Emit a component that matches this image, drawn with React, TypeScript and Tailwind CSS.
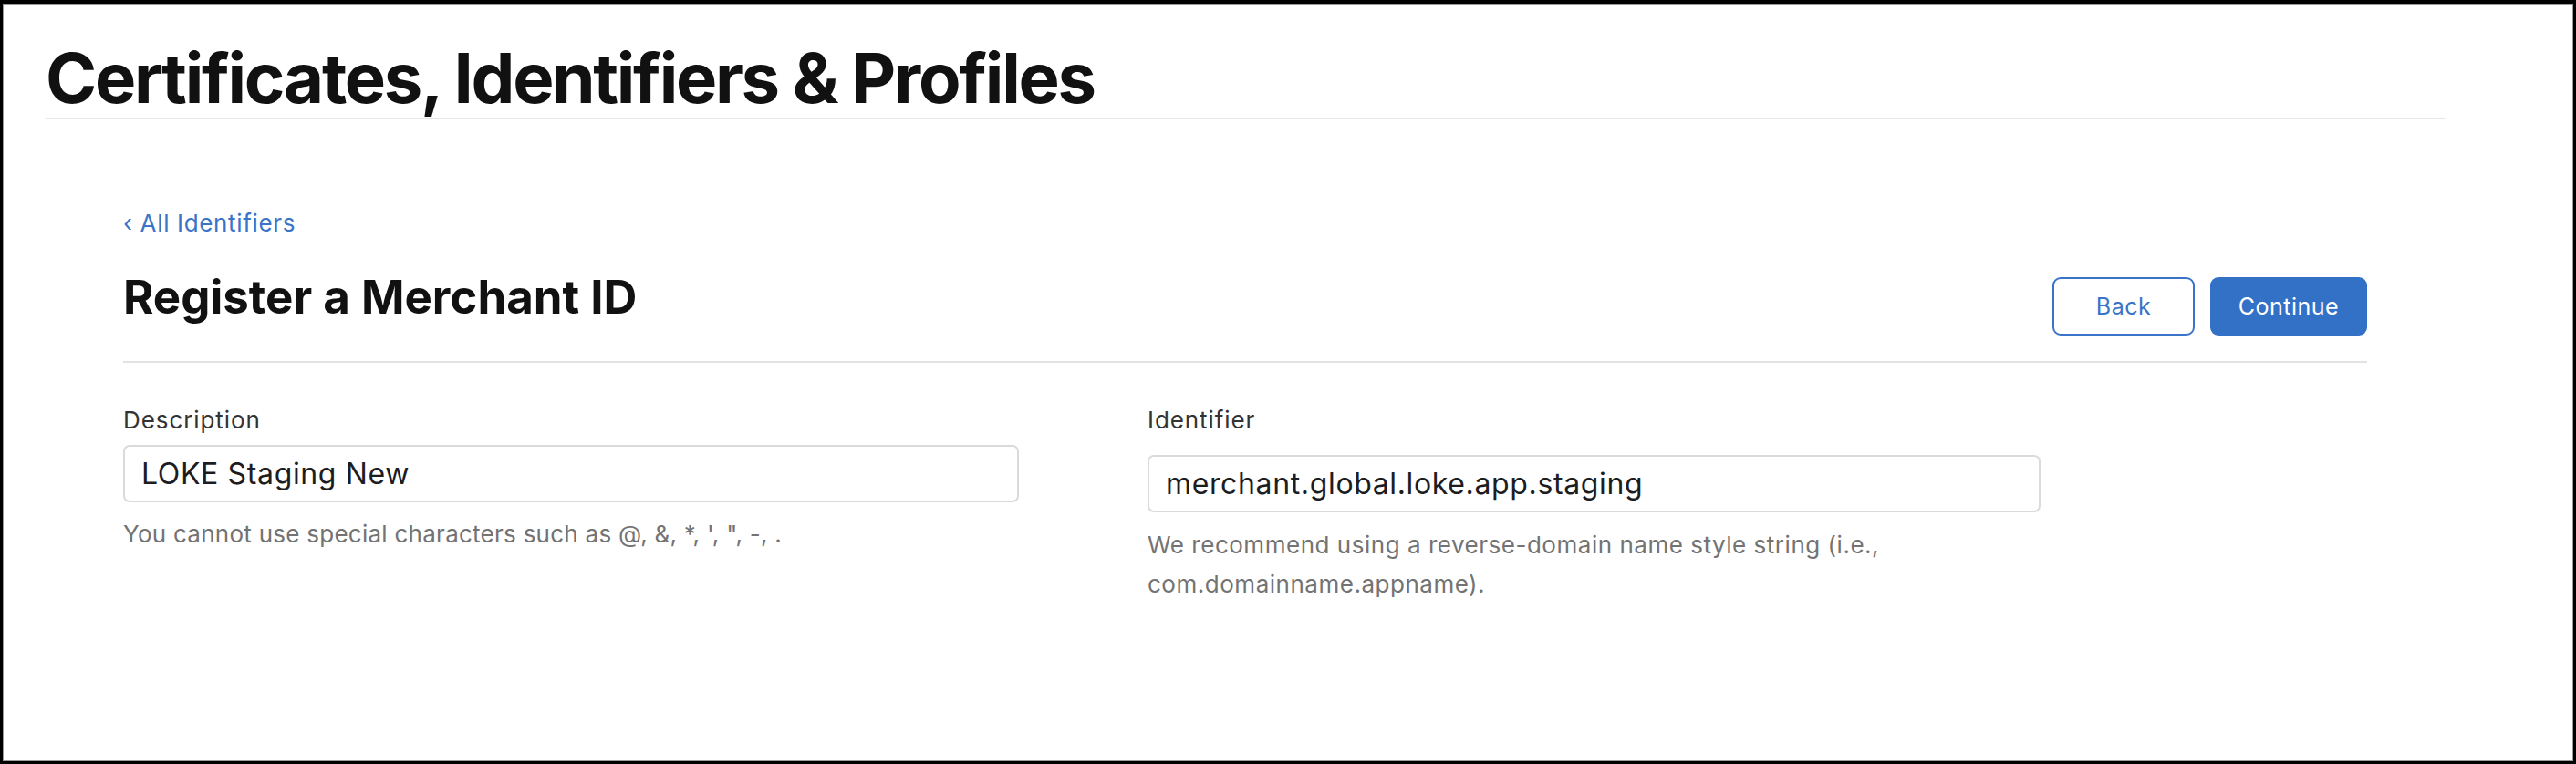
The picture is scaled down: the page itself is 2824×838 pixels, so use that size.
import React from 'react';

const font = { fontFamily: 'Inter, "Noto Sans", sans-serif' };

const App = () => {
  return (
    <div className="h-[838px] w-[2824px] bg-black pt-[4px] pl-[3px] pr-[3px] pb-[3px]" style={font}>
      <div className="h-full w-full bg-white border border-[#9c9c9c] overflow-hidden">
        {/* page header */}
        <div className="ml-[46px] w-[2632px] pt-[40px]">
          <h1 className="text-[76px] leading-[80px] font-bold text-[#111] tracking-[-0.03em]">
            Certificates, Identifiers &amp; Profiles
          </h1>
          <div className="mt-[4px] h-[2px] bg-[#e6e6e6]" />
        </div>

        {/* form */}
        <div className="ml-[131px] w-[2460px]">
          <a className="mt-[98px] block text-[26px] leading-[32px] tracking-[0.025em] text-[#3a74c9]">
            ‹ All Identifiers
          </a>

          <div className="mt-[35px] flex items-start justify-between">
            <h2 className="text-[51px] leading-[60px] font-bold text-[#111]">
              Register a Merchant ID
            </h2>
            <div className="mt-[8px] flex gap-[17px]">
              <button className="h-[64px] w-[156px] rounded-[9px] border-2 border-[#3a74c9] bg-white text-[25px] leading-[32px] tracking-[0.02em] text-[#3a74c9]">
                Back
              </button>
              <button className="h-[64px] w-[172px] rounded-[9px] bg-[#3371c7] text-[25px] leading-[32px] tracking-[0.02em] text-white">
                Continue
              </button>
            </div>
          </div>

          <div className="mt-[28px] h-[2px] bg-[#e3e3e3]" />

          <div className="mt-[47px] grid grid-cols-[1123px_1fr]">
            <div>
              <label className="block text-[26px] leading-[32px] tracking-[0.035em] text-[#333]">Description</label>
              <div className="mt-[11px] flex h-[63px] w-[982px] items-center rounded-[7px] border-2 border-[#dadada] px-[18px] text-[32px] tracking-[0.02em] text-[#1d1d1f]">
                LOKE Staging New
              </div>
              <p className="mt-[13px] text-[26px] leading-[43px] tracking-[0.01em] text-[#737373]">
                You cannot use special characters such as @, &amp;, *, ', ", -, .
              </p>
            </div>
            <div>
              <label className="block text-[26px] leading-[32px] tracking-[0.035em] text-[#333]">Identifier</label>
              <div className="mt-[22px] flex h-[63px] w-[979px] items-center rounded-[7px] border-2 border-[#dadada] px-[18px] text-[32px] tracking-[0.02em] text-[#1d1d1f]">
                merchant.global.loke.app.staging
              </div>
              <p className="mt-[14px] w-[979px] text-[26px] leading-[43px] tracking-[0.02em] text-[#737373]">
                We recommend using a reverse-domain name style string (i.e.,
                <br />
                com.domainname.appname).
              </p>
            </div>
          </div>
        </div>
      </div>
    </div>
  );
};

export default App;
